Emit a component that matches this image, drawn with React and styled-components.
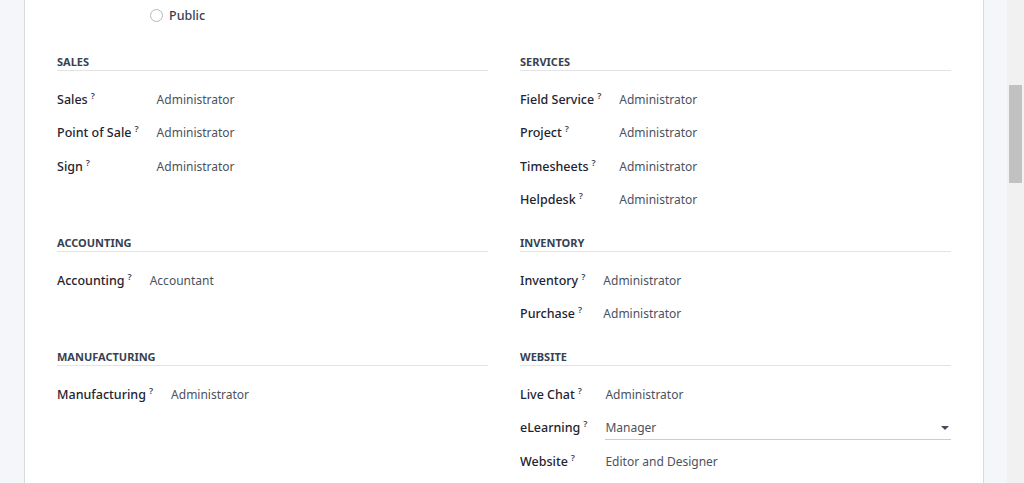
import React from "react";
import styled, { createGlobalStyle } from "styled-components";

const GlobalStyle = createGlobalStyle`
  html, body {
    margin: 0;
    padding: 0;
    height: 100%;
    overflow: hidden;
  }
  body {
    font-family: "Noto Sans", "Open Sans", sans-serif;
    font-size: 12px;
    background: #f5f6f9;
  }
`;

const Frame = styled.div`
  display: flex;
  height: 483px;
  width: 1024px;
  overflow: hidden;
`;

const Gutter = styled.div`
  width: ${(p) => p.$w}px;
  flex: none;
  background: #f5f6f9;
`;

const Sheet = styled.div`
  width: 894px;
  flex: none;
  background: #fff;
  border-left: 1px solid #d8dadd;
  border-right: 1px solid #d8dadd;
  padding: 0 32px;
`;

const ScrollTrack = styled.div`
  width: 17px;
  flex: none;
  background: #f1f1f1;
  padding-top: 85px;
  display: flex;
  justify-content: center;
`;

const ScrollThumb = styled.div`
  width: 13px;
  height: 98px;
  background: #c1c1c1;
`;

const TopRow = styled.div`
  height: 30px;
  display: flex;
  align-items: center;
  padding-left: 93px;
  gap: 6px;
  color: #374151;
  font-size: 12.5px;
  font-weight: 500;
`;

const Radio = styled.span`
  width: 11px;
  height: 11px;
  border: 1px solid #b5b9bf;
  border-radius: 50%;
  background: #fff;
`;

const Columns = styled.div`
  margin-top: 24px;
  display: grid;
  grid-template-columns: 431px 431px;
  column-gap: 32px;
  align-items: start;
`;

const Group = styled.div`
  margin-bottom: 18px;
`;

const Header = styled.div`
  height: 16px;
  line-height: 16px;
  font-size: 11px;
  font-weight: 700;
  text-transform: uppercase;
  color: #374151;
  border-bottom: 1px solid #e2e3e6;
`;

const Fields = styled.div`
  margin-top: 12px;
  display: grid;
  grid-template-columns: max-content 1fr;
  grid-auto-rows: 33.5px;
  column-gap: 16px;
  align-items: center;
  line-height: 18px;
`;

const Label = styled.div`
  color: #1f2430;
  font-size: 12.5px;
  font-weight: 500;
  white-space: nowrap;
`;

const Help = styled.span`
  display: inline-block;
  font-size: 9px;
  font-weight: 600;
  line-height: 9px;
  color: #3b4350;
  margin-left: 3px;
  margin-right: 2px;
  vertical-align: top;
`;

const Value = styled.div`
  color: #4b5260;
`;

const Select = styled.div`
  display: flex;
  align-items: center;
  justify-content: space-between;
  color: #4b5260;
  border-bottom: 1px solid #c9ccd1;
  height: 22px;
  margin-top: 1px;
  padding-right: 2px;
`;

const Caret = styled.span`
  width: 0;
  height: 0;
  border-left: 4px solid transparent;
  border-right: 4px solid transparent;
  border-top: 4px solid #444b57;
`;

const columnsData = [
  [
    {
      title: "Sales",
      fields: [
        ["Sales", "Administrator"],
        ["Point of Sale", "Administrator"],
        ["Sign", "Administrator"],
      ],
    },
    {
      title: "Services",
      fields: [
        ["Field Service", "Administrator"],
        ["Project", "Administrator"],
        ["Timesheets", "Administrator"],
        ["Helpdesk", "Administrator"],
      ],
    },
  ],
  [
    { title: "Accounting", fields: [["Accounting", "Accountant"]] },
    {
      title: "Inventory",
      fields: [
        ["Inventory", "Administrator"],
        ["Purchase", "Administrator"],
      ],
    },
  ],
  [
    { title: "Manufacturing", fields: [["Manufacturing", "Administrator"]] },
    {
      title: "Website",
      fields: [
        ["Live Chat", "Administrator"],
        ["eLearning", "Manager", true],
        ["Website", "Editor and Designer"],
      ],
    },
  ],
];

function FieldGroup({ title, fields }) {
  return (
    <Group>
      <Header>{title}</Header>
      <Fields>
        {fields.map(([label, value, select]) => (
          <React.Fragment key={label}>
            <Label>
              {label}
              <Help>?</Help>
            </Label>
            {select ? (
              <Select>
                {value}
                <Caret />
              </Select>
            ) : (
              <Value>{value}</Value>
            )}
          </React.Fragment>
        ))}
      </Fields>
    </Group>
  );
}

export default function App() {
  return (
    <>
      <GlobalStyle />
      <Frame>
        <Gutter $w={24} />
        <Sheet>
          <TopRow>
            <Radio />
            Public
          </TopRow>
          <Columns>
            {columnsData.flat().map((g) => (
              <FieldGroup key={g.title} {...g} />
            ))}
          </Columns>
        </Sheet>
        <Gutter $w={23} />
        <ScrollTrack>
          <ScrollThumb />
        </ScrollTrack>
      </Frame>
    </>
  );
}
